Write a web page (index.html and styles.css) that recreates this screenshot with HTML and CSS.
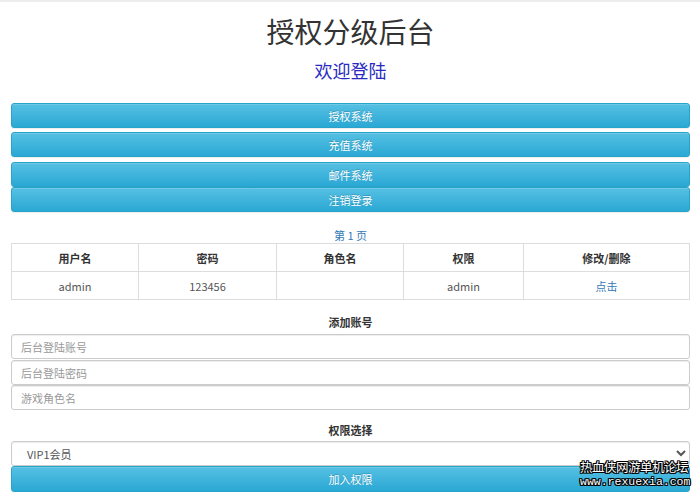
FILE: index.html
```html
<!DOCTYPE html>
<html lang="zh-CN">
<head>
    <meta charset="UTF-8">
    <meta name="viewport" content="width=device-width, initial-scale=1.0">
    <title>授权分级后台</title>
    <link rel="stylesheet" href="styles.css">
</head>
<body>
    <div class="container">
        <h1 class="title">授权分级后台</h1>
        <h2 class="welcome">欢迎登陆</h2>

        <div class="menu">
            <button class="btn gap4">授权系统</button>
            <button class="btn gap5">充值系统</button>
            <button class="btn">邮件系统</button>
            <button class="btn">注销登录</button>
        </div>

        <div class="pager"><a class="page-link" href="#">第 1 页</a></div>
        <table class="users">
            <thead>
                <tr>
                    <th class="c1">用户名</th>
                    <th class="c2">密码</th>
                    <th class="c3">角色名</th>
                    <th class="c4">权限</th>
                    <th class="c5">修改/删除</th>
                </tr>
            </thead>
            <tbody>
                <tr>
                    <td>admin</td>
                    <td>123456</td>
                    <td></td>
                    <td>admin</td>
                    <td><a class="page-link" href="#">点击</a></td>
                </tr>
            </tbody>
        </table>

        <form class="add-form">
            <div class="label">添加账号</div>
            <input class="field gap1" type="text" placeholder="后台登陆账号">
            <input class="field" type="text" placeholder="后台登陆密码">
            <input class="field" type="text" placeholder="游戏角色名">

            <div class="label label-top">权限选择</div>
            <select class="field select">
                <option>VIP1会员</option>
                <option>VIP2会员</option>
                <option>管理员</option>
            </select>
            <button class="btn btn-add" type="button">加入权限</button>
        </form>
    </div>

    <div class="watermark">
        <div class="wm-cn">热血侠网游单机论坛</div>
        <div class="wm-url">www.rexuexia.com</div>
    </div>
</body>
</html>
```

FILE: styles.css
```css
body {
    margin: 0;
    padding: 0;
    border-top: 2px solid #ececec;
    background-color: #ffffff;
    font-family: "Noto Sans CJK SC", "Noto Sans", sans-serif;
    font-size: 11px;
    color: #333333;
}

.container {
    margin: 0 10px 0 11px;
    display: flex;
    flex-direction: column;
}

.title {
    margin: 12px 0 0 0;
    font-size: 28px;
    line-height: 34px;
    font-weight: normal;
    text-align: center;
    color: #333333;
}

.welcome {
    margin: 10px 0 0 0;
    font-size: 18px;
    line-height: 24px;
    font-weight: normal;
    text-align: center;
    color: #2a2ac0;
}

.menu {
    margin-top: 21px;
    display: flex;
    flex-direction: column;
}

.btn {
    display: block;
    width: 100%;
    height: 25px;
    padding: 0;
    border: 1px solid #28a4c9;
    border-radius: 3px;
    background-image: linear-gradient(to bottom, #56c0e3 0, #2aa8d4 100%);
    box-shadow: inset 0 1px 0 rgba(255, 255, 255, 0.15), 0 1px 1px rgba(0, 0, 0, 0.075);
    color: #ffffff;
    font-family: inherit;
    font-size: 11px;
    text-shadow: 0 -1px 0 rgba(0, 0, 0, 0.2);
    cursor: pointer;
}

.gap4 {
    margin-bottom: 4px;
}

.gap5 {
    margin-bottom: 5px;
}

.gap1 {
    margin-bottom: 1px;
}

.pager {
    margin-top: 15px;
    line-height: 16px;
    text-align: center;
}

.page-link {
    color: #337ab7;
    text-decoration: none;
}

.users {
    width: 100%;
    border-collapse: collapse;
    table-layout: fixed;
}

.users th,
.users td {
    height: 27px;
    padding: 0;
    border: 1px solid #dddddd;
    text-align: center;
    font-size: 11px;
}

.users th {
    font-weight: bold;
    color: #333333;
}

.users td {
    color: #555555;
}

.c1 { width: 126px; }
.c2 { width: 137px; }
.c3 { width: 126px; }
.c4 { width: 119px; }
.c5 { width: auto; }

.add-form {
    margin-top: 14px;
    display: flex;
    flex-direction: column;
}

.label {
    line-height: 16px;
    text-align: center;
    font-weight: bold;
    margin-bottom: 4px;
}

.label-top {
    margin-top: 12px;
    margin-bottom: 3px;
}

.field {
    box-sizing: border-box;
    width: 100%;
    height: 25px;
    padding: 0 9px;
    border: 1px solid #cccccc;
    border-radius: 3px;
    background-color: #ffffff;
    color: #555555;
    font-family: inherit;
    font-size: 11px;
    box-shadow: inset 0 1px 1px rgba(0, 0, 0, 0.075);
    outline: none;
}

.field::placeholder {
    color: #999999;
}

.select {
    padding-left: 11px;
}

.btn-add {
    height: 26px;
}

.watermark {
    position: absolute;
    left: 580px;
    top: 459px;
    color: #ffffff;
    text-shadow: 1px 0 0 #000, -1px 0 0 #000, 0 1px 0 #000, 0 -1px 0 #000,
        1px 1px 0 #000, -1px -1px 0 #000, 1px -1px 0 #000, -1px 1px 0 #000;
}

.wm-cn {
    font-size: 12.5px;
    line-height: 16px;
    letter-spacing: -0.5px;
}

.wm-url {
    font-family: "Liberation Mono", monospace;
    font-size: 11.5px;
    line-height: 13px;
}
```
